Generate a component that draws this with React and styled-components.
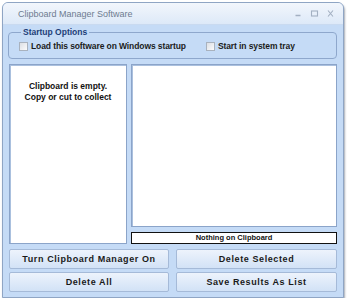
import styled, { createGlobalStyle } from "styled-components";

const Global = createGlobalStyle`
  html, body { margin: 0; padding: 0; background: #ffffff; }
  body { font-family: "Liberation Sans", Arial, sans-serif; }
`;

const Window = styled.div`
  margin: 2px 0 0 2px;
  width: 340px;
  height: 294px;
  border: 1px solid #8fa5c4;
  border-radius: 6px 6px 0 0;
  background: #c5dbf6;
  box-shadow: 1px 2px 2px rgba(60, 70, 90, 0.45);
  display: flex;
  flex-direction: column;
  overflow: hidden;
`;

const TitleBar = styled.div`
  height: 21px;
  display: flex;
  align-items: center;
  padding: 0 8px 0 15px;
  background: linear-gradient(#f2f6fc, #dde9f8);
  border-bottom: 1px solid #c9daf0;
`;

const Title = styled.div`
  flex: 1;
  font-size: 9px;
  color: #6e7c90;
`;

const Controls = styled.div`
  display: flex;
  gap: 7px;
  align-items: center;
`;

const Body = styled.div`
  flex: 1;
  display: flex;
  flex-direction: column;
  padding: 2px 6px 0 5px;
`;

const Group = styled.fieldset`
  margin: 0;
  padding: 4px 0 0 10px;
  height: 26px;
  border: 1px solid #8ea7cc;
  border-radius: 4px;
  display: flex;
  align-items: center;
  gap: 20px;
`;

const Legend = styled.legend`
  padding: 0 2px;
  margin-left: 2px;
  font-size: 8.5px;
  font-weight: bold;
  color: #1d3e78;
`;

const Check = styled.label`
  display: flex;
  align-items: center;
  gap: 3px;
  font-size: 8.5px;
  font-weight: bold;
  letter-spacing: -0.1px;
  color: #1b1b1b;
`;

const Box = styled.span`
  width: 7px;
  height: 7px;
  border: 1px solid #a9b2be;
  background: linear-gradient(135deg, #dcdfe4, #fbfbfc);
`;

const Panels = styled.div`
  margin-top: 5px;
  display: flex;
  gap: 4px;
  height: 180px;
  padding-left: 1px;
`;

const Panel = styled.div`
  background: #ffffff;
  border: 1px solid #8ba4c9;
  box-shadow: inset 1px 1px 0 #aac0de;
  width: ${(p) => (p.$w ? `${p.$w}px` : "auto")};
  flex: ${(p) => (p.$w ? "none" : "1")};
  box-sizing: border-box;
`;

const EmptyText = styled.div`
  margin-top: 16px;
  text-align: center;
  font-size: 8.5px;
  font-weight: bold;
  line-height: 11px;
  color: #111;
`;

const RightCol = styled.div`
  flex: 1;
  display: flex;
  flex-direction: column;
  gap: 5px;
`;

const Status = styled.div`
  height: 10px;
  border: 1px solid #111;
  background: #ffffff;
  font-size: 7.5px;
  font-weight: bold;
  line-height: 10px;
  text-align: center;
  color: #111;
`;

const Buttons = styled.div`
  margin-top: 5px;
  padding-left: 1px;
  display: grid;
  grid-template-columns: 160px 1fr;
  column-gap: 7px;
  row-gap: 3px;
`;

const Button = styled.button`
  height: 20px;
  border: 1px solid #a5bad8;
  border-radius: 2px;
  background: linear-gradient(#edf3fc, #d2e2f6);
  font-family: "Liberation Sans", Arial, sans-serif;
  font-size: 9px;
  font-weight: bold;
  letter-spacing: 0.6px;
  color: #1a1a1a;
  padding: 0;
`;

const Icon = ({ children }) => (
  <svg width="9" height="9" viewBox="0 0 9 9" fill="none" stroke="#a3b0c2" strokeWidth="1.1">
    {children}
  </svg>
);

export default function App() {
  return (
    <>
      <Global />
      <Window>
        <TitleBar>
          <Title>Clipboard Manager Software</Title>
          <Controls>
            <Icon><path d="M1.5 6.5h5" strokeWidth="1.6" /></Icon>
            <Icon><rect x="1.5" y="2" width="6" height="5" /></Icon>
            <Icon><path d="M2 1.5l5 6M7 1.5l-5 6" /></Icon>
          </Controls>
        </TitleBar>
        <Body>
          <Group>
            <Legend>Startup Options</Legend>
            <Check><Box />Load this software on Windows startup</Check>
            <Check><Box />Start in system tray</Check>
          </Group>
          <Panels>
            <Panel $w={118}>
              <EmptyText>
                Clipboard is empty.
                <br />
                Copy or cut to collect
              </EmptyText>
            </Panel>
            <RightCol>
              <Panel />
              <Status>Nothing on Clipboard</Status>
            </RightCol>
          </Panels>
          <Buttons>
            <Button>Turn Clipboard Manager On</Button>
            <Button>Delete Selected</Button>
            <Button>Delete All</Button>
            <Button>Save Results As List</Button>
          </Buttons>
        </Body>
      </Window>
    </>
  );
}
